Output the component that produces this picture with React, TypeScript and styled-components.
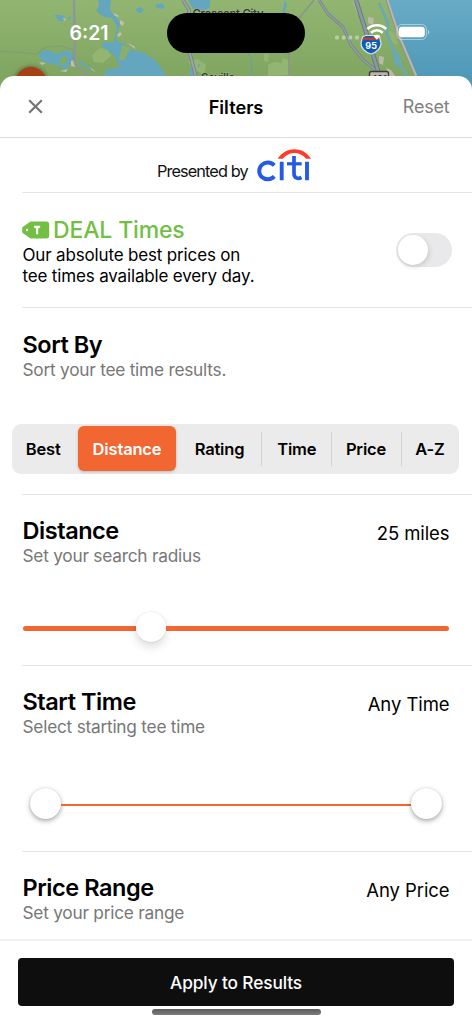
import React from "react";
import styled, { createGlobalStyle, css } from "styled-components";

const ORANGE = "#f26631";
const GREEN = "#72bf44";
const LINE = "#e4e4e4";

const GlobalStyle = createGlobalStyle`
  * { box-sizing: border-box; }
  body { margin: 0; background: #fff; }
  button { border: 0; padding: 0; background: none; font: inherit; color: inherit; }
`;

const Screen = styled.div`
  position: relative;
  display: flex;
  flex-direction: column;
  width: 472px;
  height: 1024px;
  overflow: hidden;
  background: #fff;
  color: #000;
  font-family: Inter, "Liberation Sans", sans-serif;
`;

const Backdrop = styled.svg`
  position: absolute;
  top: 0;
  left: 0;
`;

const StatusBar = styled.div`
  position: relative;
  flex: none;
  display: grid;
  grid-template-columns: 167px 138px 1fr;
  align-items: center;
  height: 66px;
  margin-bottom: 10px;
`;

const Clock = styled.span`
  padding-left: 69.5px;
  color: #fff;
  font-size: 19.5px;
  font-weight: 600;
  line-height: 24px;
`;

const Island = styled.div`
  height: 40px;
  border-radius: 20px;
  background: #000;
`;

const Indicators = styled.div`
  display: flex;
  align-items: center;
  padding-left: 29px;
`;

const Sheet = styled.main`
  position: relative;
  flex: 1;
  display: flex;
  flex-direction: column;
  border-radius: 14px 14px 0 0;
  background: #fff;
`;

const Header = styled.header`
  flex: none;
  display: grid;
  grid-template-columns: 1fr auto 1fr;
  align-items: center;
  height: 62px;
  padding: 0 22.5px;
  border-bottom: 1px solid #dedede;
  font-size: 18px;
  line-height: 22px;
`;

const CloseButton = styled.button`
  display: flex;
  margin-left: 4px;
`;

const HeaderTitle = styled.h1`
  margin: 0;
  font-size: 18.2px;
  font-weight: 600;
`;

const ResetButton = styled.button`
  justify-self: end;
  padding-top: 1px;
  color: #808080;
  letter-spacing: -0.2px;
`;

const Sponsor = styled.div`
  flex: none;
  display: flex;
  height: 55px;
  margin-left: 22px;
  padding: 11px 0 0 135px;
  gap: 9px;
  border-bottom: 1px solid ${LINE};
`;

const SponsorText = styled.span`
  width: 91px;
  padding-top: 12px;
  color: #111;
  font-size: 16.3px;
  line-height: 20px;
  letter-spacing: -0.9px;
  white-space: nowrap;
`;

const Section = styled.section<{ $height: number; $top?: number; $last?: boolean }>`
  flex: none;
  height: ${(p) => p.$height}px;
  margin-left: 22px;
  padding: ${(p) => p.$top ?? 22}px 22.5px 0 0.5px;
  ${(p) =>
    !p.$last &&
    css`
      border-bottom: 1px solid ${LINE};
    `}
`;

const SectionHead = styled.div`
  display: flex;
  justify-content: space-between;
`;

const Title = styled.h2`
  margin: 0;
  font-size: 23.5px;
  font-weight: 600;
  line-height: 28px;
  letter-spacing: -0.45px;
  white-space: nowrap;
`;

const Subtitle = styled.p`
  margin: 0;
  color: #777;
  font-size: 17.3px;
  line-height: 22px;
  letter-spacing: -0.24px;
  white-space: nowrap;
`;

const Value = styled.span`
  margin-bottom: -2px;
  padding-top: 2px;
  font-size: 18.5px;
  line-height: 28px;
  letter-spacing: -0.08px;
  white-space: nowrap;
`;

const DealTitle = styled.h2`
  display: flex;
  align-items: center;
  gap: 3px;
  margin: 0 0 1px -0.5px;
  color: ${GREEN};
  font-size: 23px;
  font-weight: 500;
  line-height: 28px;
  letter-spacing: -0.15px;
`;

const DealText = styled.p`
  margin: 0;
  font-size: 17px;
  line-height: 21px;
  letter-spacing: -0.16px;
  white-space: nowrap;
`;

const Toggle = styled.button`
  width: 56px;
  height: 34px;
  margin: 17px -2.5px 0 0;
  padding: 2px;
  border-radius: 17px;
  background: #e9e9eb;
`;

const ToggleKnob = styled.span`
  display: block;
  width: 30px;
  height: 30px;
  border-radius: 50%;
  background: #fff;
  box-shadow: 1px 2px 5px rgba(0, 0, 0, 0.14);
`;

const Segments = styled.div`
  display: flex;
  align-items: center;
  width: 447px;
  height: 49.5px;
  margin: 43px 0 0 -11px;
  border-radius: 9px;
  background: #ebebeb;
`;

const Segment = styled.button<{ $width: number; $nudge?: number; $active?: boolean; $divided?: boolean }>`
  flex: none;
  width: ${(p) => p.$width}px;
  height: 34px;
  font-size: 16.5px;
  font-weight: 600;
  letter-spacing: -0.17px;
  text-indent: ${(p) => p.$nudge ?? 0}px;
  white-space: nowrap;
  border-right: ${(p) => (p.$divided ? "1px solid #d2d2d2" : "0")};
  ${(p) =>
    p.$active &&
    css`
      height: 45px;
      border-radius: 6px;
      background: ${ORANGE};
      color: #fff;
      box-shadow: 0 1px 3px rgba(0, 0, 0, 0.22);
    `}
`;

const Track = styled.div<{ $top: number; $left: number; $right: number }>`
  display: flex;
  align-items: center;
  margin: ${(p) => p.$top}px ${(p) => p.$right}px 0 ${(p) => p.$left}px;
  height: 32px;
`;

const Rail = styled.div<{ $thick: number; $width?: number; $end?: "left" | "right" }>`
  flex: ${(p) => (p.$width ? "none" : 1)};
  width: ${(p) => (p.$width ? `${p.$width}px` : "auto")};
  height: ${(p) => p.$thick}px;
  margin-top: 2px;
  background: ${ORANGE};
  border-radius: ${(p) => (p.$end === "left" ? "3px 0 0 3px" : p.$end === "right" ? "0 3px 3px 0" : "0")};
`;

const Thumb = styled.span<{ $size: number; $soft?: boolean }>`
  flex: none;
  width: ${(p) => p.$size}px;
  height: ${(p) => p.$size}px;
  border-radius: 50%;
  background: #fff;
  box-shadow: ${(p) =>
    p.$soft
      ? "0 5px 10px rgba(0,0,0,.14), 0 0 2px rgba(0,0,0,.12)"
      : "0 2px 5px rgba(0,0,0,.34), 0 0 1px rgba(0,0,0,.2)"};
`;

const Footer = styled.footer`
  position: absolute;
  right: 0;
  bottom: 0;
  left: 0;
  display: flex;
  flex-direction: column;
  height: 85px;
  padding: 17px 18px 0;
  border-top: 2px solid #f1f1f1;
  background: #fff;
`;

const ApplyButton = styled.button`
  flex: none;
  height: 48px;
  border-radius: 4px;
  background: #0e0e0e;
  color: #fff;
  font-size: 17.3px;
  font-weight: 500;
  letter-spacing: -0.12px;
`;

const HomeIndicator = styled.div`
  width: 169px;
  height: 5.5px;
  margin: 3px auto 0;
  border-radius: 3px;
  background: linear-gradient(#5c5c5c, #7c7c7c);
`;

function MapBackdrop() {
  return (
    <Backdrop width="472" height="100" viewBox="0 0 472 100">
      <defs>
        <linearGradient id="land" x1="0" y1="0" x2="0" y2="1">
          <stop offset="0" stopColor="#92b672" />
          <stop offset="0.78" stopColor="#7fa560" />
        </linearGradient>
        <linearGradient id="sea" x1="0" y1="0" x2="0" y2="1">
          <stop offset="0" stopColor="#68abc6" />
          <stop offset="0.8" stopColor="#4f98b8" />
        </linearGradient>
        <filter id="pinShadow" x="-50%" y="-50%" width="200%" height="200%">
          <feDropShadow dx="0" dy="0" stdDeviation="2.5" floodOpacity="0.5" />
        </filter>
      </defs>
      <rect width="472" height="100" fill="url(#land)" />
      <g fill="#94b571">
        <path d="M92 55l8-7 8 2 3 6-8 7-9-1zM78 0h5l-3 4zM188 61l10-2 8 6-2 10-12-7zM268 65l6-3 8 1v-5l8 2-1 15-21 1zM264 54l5-1-1 9-4-1zM387 30l7 3 4 12-5-2z" />
      </g>
      <g fill="#65a6bf">
        <path d="M98 0h13l-1 9 2 4 6 6 2 6-4 12 2 4 6 3 8 6 12 3 12 8 12 17H103l3-8 14-3-6-12-7-5-6-4 3-4 10 1 1-7 2-9-5-9-8-1-8-6 3-5z" />
        <path d="M40 52l7-2 10 4 9-4 8 4-2 8-3 4-4 4-4-3-8-3-7-1-7-5z" />
        <path d="M54 15l6 0 4 1 0 5-5 0zM67 18l4-2-1 5zM136 9l4-2 4 3-3 3-4-1zM155 5l4-1 3-1 3 4-3 2-5-1zM165 19l4 3-3-1z" />
        <path d="M188 0h22v7l-6 4-11-2zM191 58l2 4-2 3zM190 66l4 7 1 4h-5zM198 63l3 3-3 1zM79 60l16 11-2 0-14-8zM0 66l1 4H0z" />
        <path d="M285 0l2 5-3 9h-2z" />
      </g>
      <path d="M119 60l3-15 9 3-7 12z" fill="#89af6a" />
      <path d="M59 60l6-5 3 5-6 6z" fill="#83aa64" />
      <path d="M113 13l5 2 1 2-4-1zM120 20l4 2-1 4-3-2zM117 35l3-3 2 2-3 3zM127 43l7 3 2 3-5-3zM39 62l7 1-4 2zM60 71l8-2-2 3zM71 61l3-1 1 7-4-1zM90 67l6 5-4-2zM63 18l3 1-2 2z" fill="#c3beae" />
      <path d="M0 51l37 3 9-7 15-1 12 4 1 12" fill="none" stroke="#839b74" strokeWidth="1.200" />
      <path d="M74 0l1 64 16 14" fill="none" stroke="#8b9895" strokeWidth="2.400" />
      <path d="M183 0l6 10v40l7 27" fill="none" stroke="#778281" strokeWidth="3.600" />
      <path d="M183 0l6 10v40l7 27" fill="none" stroke="#98a5a6" strokeWidth="2" />
      <path d="M314 0l-14 17-11 14v45" fill="none" stroke="#8b9788" strokeWidth="1.800" />
      <path d="M247 52l4 6 1 19" fill="none" stroke="#649fae" strokeWidth="1" />
      <path d="M319 0l9 14 15 13 8 18 12 15 15 12" fill="none" stroke="#77838c" strokeWidth="3" />
      <path d="M319 0l9 14 15 13 8 18 12 15 15 12" fill="none" stroke="#929fa0" strokeWidth="1.500" />
      <path d="M387 0h85v100h-35l-21-24-17-36z" fill="url(#sea)" />
      <path d="M387 0l12 36 17 40" fill="none" stroke="#bdb8a8" strokeWidth="2.600" />
      <path d="M386 0l12 37 17 40" fill="none" stroke="#8b9694" strokeWidth="1.200" />
      <path d="M379 3l5 11 4 10-1 9 5 15 7 9 2 10 6 9" fill="none" stroke="#69a8b6" strokeWidth="2.600" />
      <path d="M391 47l4 3 4 11-1 8-3-4z" fill="#69a8b6" />
      <path d="M353 1l4 1 3 10-3 1zM368 17l6 1-1 7-5-2zM379 56l5 1-1 8-4-2zM386 68l5 2 4 6h-6z" fill="#bdb9a8" />
      <path d="M356 0l10 32 13 42" fill="none" stroke="#6a7981" strokeWidth="4.600" />
      <path d="M356 0l10 32 13 42" fill="none" stroke="#8999a2" strokeWidth="2.600" />
      <g fill="#30392b" stroke="#9bb681" strokeWidth="1" paintOrder="stroke" fontFamily="Inter, sans-serif" fontSize="11.500" fontWeight="500">
        <text x="192.500" y="17.500" textLength="71">Crescent City</text>
        <text x="201" y="82" textLength="34">Seville</text>
      </g>
      <circle cx="31" cy="83" r="16" fill="#a83f13" filter="url(#pinShadow)" />
      <rect x="369.500" y="71.500" width="19" height="12" rx="2" fill="#b5b5aa" stroke="#3b3b38" strokeWidth="1.400" />
      <text x="379" y="82" textAnchor="middle" fontFamily="Inter, sans-serif" fontSize="9" fontWeight="700" fill="#333">421</text>
      <path d="M362.500 37l3-1.500h11l3 1.500 1.500 6c0 6-4 9-10 11-6-2-10-5-10-11z" fill="#0d5db5" stroke="#dde3e6" strokeWidth="1.200" />
      <path d="M363.500 37.500h15l1 2.500h-17z" fill="#c43c31" />
      <text x="371.100" y="49" textAnchor="middle" fontFamily="Inter, sans-serif" fontSize="9" fontWeight="700" fill="#fff">95</text>
    </Backdrop>
  );
}

function StatusIcons() {
  return (
    <svg width="98" height="26" viewBox="0 0 98 26" fill="#fff">
      <g opacity="0.4">
        <rect x="1" y="15.500" width="4" height="4" rx="1.500" />
        <rect x="7.700" y="15.500" width="4" height="4" rx="1.500" />
        <rect x="14.300" y="15.500" width="4" height="4" rx="1.500" />
        <rect x="21" y="15.500" width="4" height="4" rx="1.500" />
      </g>
      <g fill="none" stroke="#fff" strokeWidth="2.600">
        <path d="M33.400 9c5.500-5.100 13.400-5.100 18.900 0" />
        <path d="M37 12.800c3.600-3.200 8.200-3.200 11.800 0" />
      </g>
      <path d="M39.300 16c2.100-1.800 5-1.800 7.100 0L42.850 19.700z" />
      <rect x="63" y="4.500" width="29.500" height="15" rx="4.800" fill="none" stroke="#fff" strokeOpacity="0.45" />
      <rect x="64.800" y="6.700" width="26" height="10.600" rx="3.200" />
      <path d="M94 9.700v4.800c1.800-.8 1.800-4 0-4.800z" opacity="0.5" />
    </svg>
  );
}

function CitiLogo() {
  return (
    <svg width="55" height="34" viewBox="0 0 55 34" role="img" aria-label="citi">
      <path d="M20.700 9.700C29-2.800 46-2.800 54 9.700h-4.900C43 2 32 2 25.700 9.700z" fill="#ff3c28" />
      <g fill="none" stroke="#255be3" strokeWidth="3.900">
        <path d="M17.300 16.400A8.600 8.400 0 1 0 17.300 27.400" />
        <path d="M24.700 12.700v18.600M50 12.700v18.600" />
        <path d="M37 7v17.400c0 4.700 4 6 7.500 4" strokeWidth="3.700" />
        <path d="M30 14.800h14.700" strokeWidth="3.200" />
      </g>
    </svg>
  );
}

function DealTag() {
  return (
    <svg width="28" height="18" viewBox="0 0 28 18">
      <path d="M8.500.5h15.700a3 3 0 0 1 3 3v11a3 3 0 0 1-3 3H8.500L1 12.200C-.1 11.300.2 10 .2 9s-.3-2.300.8-3.200z" fill={GREEN} />
      <circle cx="5" cy="9" r="1.200" fill="#fff" />
      <path d="M12 4.800h6.200v1.800l-2 1v5.600h-2.200V7.600l-2-1z" fill="#fff" />
    </svg>
  );
}

const SORTS = [
  { label: "Best", width: 66.5, nudge: -3 },
  { label: "Distance", width: 98, active: true },
  { label: "Rating", width: 86, nudge: 2, divided: true },
  { label: "Time", width: 69.5, nudge: 1, divided: true },
  { label: "Price", width: 70, divided: true },
  { label: "A-Z", width: 57 },
];

export default function App() {
  return (
    <Screen>
      <GlobalStyle />
      <MapBackdrop />
      <StatusBar>
        <Clock>6:21</Clock>
        <Island />
        <Indicators>
          <StatusIcons />
        </Indicators>
      </StatusBar>
      <Sheet>
        <Header>
          <CloseButton aria-label="Close">
            <svg width="17" height="17" viewBox="0 0 17 17" stroke="#757575" strokeWidth="2.200">
              <path d="M2.200 2.200l12.600 12.600M14.800 2.200L2.200 14.800" />
            </svg>
          </CloseButton>
          <HeaderTitle>Filters</HeaderTitle>
          <ResetButton>Reset</ResetButton>
        </Header>
        <Sponsor>
          <SponsorText>Presented by</SponsorText>
          <CitiLogo />
        </Sponsor>
        <Section $height={115} $top={23}>
          <SectionHead>
            <div>
              <DealTitle>
                <DealTag />
                DEAL Times
              </DealTitle>
              <DealText>
                Our absolute best prices on
                <br />
                tee times available every day.
              </DealText>
            </div>
            <Toggle role="switch" aria-checked={false} aria-label="DEAL Times">
              <ToggleKnob />
            </Toggle>
          </SectionHead>
        </Section>
        <Section $height={187} $top={23}>
          <Title>Sort By</Title>
          <Subtitle>Sort your tee time results.</Subtitle>
          <Segments>
            {SORTS.map((s) => (
              <Segment key={s.label} $width={s.width} $nudge={s.nudge} $active={s.active} $divided={s.divided}>
                {s.label}
              </Segment>
            ))}
          </Segments>
        </Section>
        <Section $height={171}>
          <SectionHead>
            <Title>Distance</Title>
            <Value>25 miles</Value>
          </SectionHead>
          <Subtitle>Set your search radius</Subtitle>
          <Track $top={44} $left={0.5} $right={0.5}>
            <Rail $thick={5} $width={113} $end="left" />
            <Thumb $size={30} $soft />
            <Rail $thick={5} $end="right" />
          </Track>
        </Section>
        <Section $height={186}>
          <SectionHead>
            <Title>Start Time</Title>
            <Value>Any Time</Value>
          </SectionHead>
          <Subtitle>Select starting tee time</Subtitle>
          <Track $top={49.5} $left={7.5} $right={8}>
            <Thumb $size={31} />
            <Rail $thick={2} />
            <Thumb $size={31} />
          </Track>
        </Section>
        <Section $height={88} $last>
          <SectionHead>
            <Title>Price Range</Title>
            <Value>Any Price</Value>
          </SectionHead>
          <Subtitle>Set your price range</Subtitle>
        </Section>
        <Footer>
          <ApplyButton>Apply to Results</ApplyButton>
          <HomeIndicator />
        </Footer>
      </Sheet>
    </Screen>
  );
}
